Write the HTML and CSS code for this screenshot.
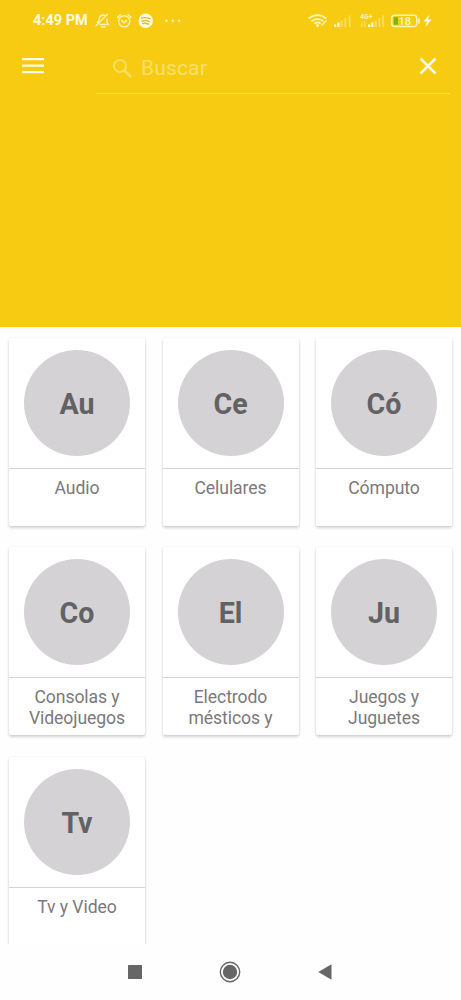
FILE: index.html
```html
<!DOCTYPE html>
<html lang="es">
<head>
<meta charset="utf-8">
<title>Categorías</title>
<link rel="stylesheet" href="styles.css">
</head>
<body>
<div class="app">
  <header class="header">
    <div class="status">
      <span class="clock">4:49 PM</span>
      <svg class="status-left" width="90" height="18" viewBox="94 12 90 18" fill="none" stroke="#fff3b0" stroke-width="1.4" stroke-linecap="round">
        <path d="M100 24.500h8.500l-1.500-2.500v-3M97.500 22.500l1.500-2 .3-2c.4-2.300 2-3.500 4-3.500 1 0 1.800.3 2.500.8M101.500 27h3.500M96 25.800L107.500 14.300"/>
        <circle cx="124.200" cy="21.300" r="5.600"/>
        <path d="M121.800 20.500l2.300 2.200 2.500-2.200M117.500 17.500l3-3M131 17.500l-3-3"/>
        <circle cx="145.700" cy="20.800" r="7.300" fill="#fffbe0" stroke="none"/>
        <path d="M141.500 18.200q4.500-1.300 8.700.6M142 21q3.800-1 7.300.6M142.500 23.600q3.200-.8 6 .6" stroke="#dcbd2c"/>
        <g fill="#fff3b0" stroke="none"><circle cx="166.500" cy="20.700" r="1.200"/><circle cx="172.800" cy="20.700" r="1.200"/><circle cx="179" cy="20.700" r="1.200"/></g>
      </svg>
      <svg class="status-right" width="130" height="20" viewBox="306 11 130 20">
        <g fill="none" stroke="#fff3b0" stroke-width="1.900">
          <path d="M308.500 18.500q9-7 18 0M311.500 21.200q6-4.600 12 0M314.200 23.700q3.300-2.500 6.600 0"/>
          <path d="M321.500 25.500l5-5" stroke-width="1.600"/>
        </g>
        <circle cx="317.500" cy="25.500" r="1.500" fill="#fff3b0"/>
        <g fill="#fffbe0">
          <path d="M334 24.500h2.200V27H334zM337.300 22.500h2.200V27h-2.200zM368 24.500h2.200V27H368zM371.300 22.500h2.200V27h-2.200z"/>
          <path d="M340.600 20.500h2V27h-2zM344.500 18h1.800v9h-1.800zM348.700 15.500h1.800V27h-1.800zM374.700 20.500h2V27h-2zM378.500 18h1.800v9h-1.800zM382.300 15.500h1.800V27h-1.800zM361 22.500h1.500V27H361zM364 21h1.500v6H364z" opacity=".4"/>
        </g>
        <text class="network" x="360" y="18.500">4G+</text>
        <rect x="391.700" y="15.200" width="25" height="11.400" rx="3" fill="none" stroke="#fff3b0" stroke-width="1.500"/>
        <rect x="393.700" y="17.200" width="4.200" height="7.500" fill="#78b41b"/>
        <path d="M418 18.500h1.800v5H418z" fill="#fff3b0"/>
        <text class="battery" x="398.600" y="24.900">18</text>
        <path d="M429.500 14.500l-6 7h3.500l-1.800 5.500 6.500-7.500h-3.700z" fill="#fffbe0"/>
      </svg>
    </div>
    <div class="toolbar">
      <svg class="menu" width="24" height="18" viewBox="0 0 24 18" stroke="#fffbe8" stroke-width="2.300"><path d="M1 2.200h22M1 8.700h22M1 15.200h22"/></svg>
      <div class="search">
        <svg class="lens" width="22" height="22" viewBox="0 0 22 22" fill="none" stroke="#fadd63" stroke-width="2"><circle cx="8" cy="8" r="6"/><path d="M12.300 12.300l6.900 6.900" stroke-width="2.500"/></svg>
        <span class="placeholder">Buscar</span>
        <svg class="close" width="18" height="18" viewBox="0 0 18 18" stroke="#fffbe8" stroke-width="2.500"><path d="M1.500 1.500l15 15M16.500 1.500l-15 15"/></svg>
      </div>
    </div>
  </header>
  <main class="grid">
    <article class="card"><div class="thumb"><span class="avatar">Au</span></div><p class="label">Audio</p></article>
    <article class="card"><div class="thumb"><span class="avatar">Ce</span></div><p class="label">Celulares</p></article>
    <article class="card"><div class="thumb"><span class="avatar">Có</span></div><p class="label">Cómputo</p></article>
    <article class="card"><div class="thumb"><span class="avatar">Co</span></div><p class="label">Consolas y Videojuegos</p></article>
    <article class="card"><div class="thumb"><span class="avatar">El</span></div><p class="label">Electrodo<br>mésticos y</p></article>
    <article class="card"><div class="thumb"><span class="avatar">Ju</span></div><p class="label">Juegos y Juguetes</p></article>
    <article class="card"><div class="thumb"><span class="avatar">Tv</span></div><p class="label">Tv y Video</p></article>
  </main>
  <nav class="navbar">
    <svg width="14" height="14" viewBox="0 0 14 14"><rect width="14" height="14" rx=".5" fill="#666"/></svg>
    <svg width="22" height="22" viewBox="0 0 22 22"><circle cx="11" cy="11" r="9.700" fill="none" stroke="#666" stroke-width="1.400"/><circle cx="11" cy="11" r="7.200" fill="#666"/></svg>
    <svg width="14" height="16" viewBox="0 0 14 16"><path d="M13.500.3v15.400L.3 8z" fill="#666"/></svg>
  </nav>
</div>
</body>
</html>
```
FILE: styles.css
```css
* { box-sizing: border-box; }

body {
  margin: 0;
  background: #fefefe;
  font-family: Roboto, "Liberation Sans", sans-serif;
}

.app {
  display: flex;
  flex-direction: column;
  width: 461px;
  height: 1000px;
  overflow: hidden;
}

.header {
  flex: none;
  height: 327px;
  background: #f6cb12;
}

.status {
  display: flex;
  align-items: flex-start;
  height: 42px;
  padding: 11px 25px 0 33px;
}

.clock {
  width: 61px;
  color: #fffbe0;
  font-size: 14.5px;
  font-weight: 700;
  line-height: 20px;
  white-space: nowrap;
}

.status-left { margin-top: 1px; }
.status-right { margin-left: auto; }

.network {
  fill: #fff3b0;
  font-size: 7px;
  font-weight: 700;
}

.battery {
  fill: #fff8cf;
  font-size: 11px;
  font-weight: 500;
}

.toolbar {
  display: flex;
  align-items: flex-start;
  justify-content: space-between;
  padding: 0 11px 0 21px;
}

.menu { margin-top: 15px; }

.search {
  display: flex;
  width: 354px;
  height: 52px;
  padding: 0 13px 0 16px;
  border-bottom: 1px solid #f9da55;
}

.lens { margin-top: 16px; }

.placeholder {
  margin: 14px 0 0 7px;
  color: #fadf70;
  font-size: 21px;
  letter-spacing: 0.15px;
  line-height: 25px;
}

.close { margin: 15px 0 0 auto; }

.grid {
  display: grid;
  flex: none;
  grid-template-columns: repeat(3, 136px);
  grid-auto-rows: 188px;
  gap: 21.4px 17.5px;
  height: 617px;
  padding: 11px 9px 0;
  overflow: hidden;
}

.card {
  border-radius: 2px;
  background: #fff;
  box-shadow: 0 2px 3px rgba(0, 0, 0, 0.17), 0 0 2px rgba(0, 0, 0, 0.1);
}

.thumb {
  display: flex;
  justify-content: center;
  height: 131px;
  padding-top: 12px;
  border-bottom: 1px solid #d5d3d5;
}

.avatar {
  width: 106px;
  height: 106px;
  border-radius: 50%;
  background: #d4d2d5;
  color: #626163;
  font-size: 28.6px;
  font-weight: 700;
  line-height: 109px;
  text-align: center;
}

.label {
  margin: 0;
  padding: 9px 14px 0;
  color: #7b797c;
  font-size: 17.6px;
  letter-spacing: -0.08px;
  line-height: 20.6px;
  text-align: center;
}

.navbar {
  display: flex;
  flex: 1;
  align-items: center;
  justify-content: space-between;
  padding: 0 129.5px 0 128px;
}
```
